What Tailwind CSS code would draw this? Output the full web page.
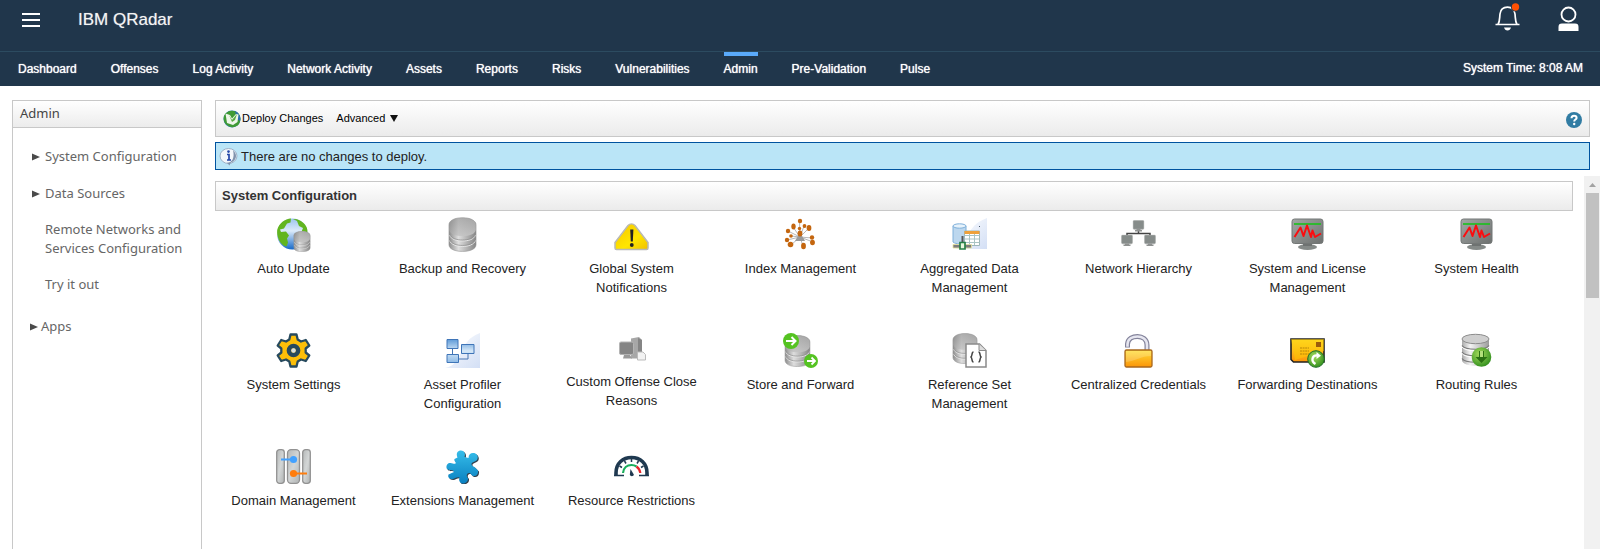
<!DOCTYPE html>
<html lang="en">
<head>
<meta charset="utf-8">
<title>IBM QRadar</title>
<script src="https://cdn.jsdelivr.net/npm/@tailwindcss/browser@4"></script>
</head>
<body class="flex h-screen flex-col overflow-hidden bg-white font-['Liberation_Sans',Arial,sans-serif] text-[13px] text-[#222]">

<svg class="absolute size-0" aria-hidden="true">
  <defs>
    <linearGradient id="steel" x1="0" x2="1"><stop offset="0" stop-color="#8d8d8d"/><stop offset=".35" stop-color="#dedede"/><stop offset="1" stop-color="#858585"/></linearGradient>
    <linearGradient id="steelTop" x1="0" y1="0" x2="1" y2="1"><stop offset="0" stop-color="#8f8f8f"/><stop offset="1" stop-color="#d4d4d4"/></linearGradient>
    <linearGradient id="silver" x1="0" x2="1"><stop offset="0" stop-color="#a9a9a9"/><stop offset=".3" stop-color="#f4f4f4"/><stop offset="1" stop-color="#9c9c9c"/></linearGradient>
    <linearGradient id="slab" x1="0" y1="0" x2="1" y2="1"><stop offset="0" stop-color="#b5b8b8"/><stop offset=".5" stop-color="#d3d6d6"/><stop offset="1" stop-color="#b0b3b3"/></linearGradient>
    <linearGradient id="screen" x1="0" y1="0" x2="1" y2="1"><stop offset="0" stop-color="#a3a8a6"/><stop offset="1" stop-color="#6d706f"/></linearGradient>
    <linearGradient id="sea" x1="0" y1="0" x2="0" y2="1"><stop offset="0" stop-color="#9cc4ee"/><stop offset=".4" stop-color="#dcebfa"/><stop offset="1" stop-color="#1669c9"/></linearGradient>
    <linearGradient id="sun" x1="0" y1="0" x2="1" y2="1"><stop offset="0" stop-color="#f5c400"/><stop offset=".6" stop-color="#ffe600"/><stop offset="1" stop-color="#f0c000"/></linearGradient>
    <linearGradient id="amber" x1="0" y1="0" x2="0" y2="1"><stop offset="0" stop-color="#ffe03a"/><stop offset="1" stop-color="#fb9408"/></linearGradient>
    <linearGradient id="haze" x1="0" y1="0" x2="1" y2="1"><stop offset="0" stop-color="#ffffff"/><stop offset="1" stop-color="#d3dff5"/></linearGradient>
    <linearGradient id="blueBox" x1="0" y1="0" x2="0" y2="1"><stop offset="0" stop-color="#5f9bd8"/><stop offset=".5" stop-color="#d6e8f8"/><stop offset="1" stop-color="#8fbbe6"/></linearGradient>
    <linearGradient id="piece" x1="0" y1="0" x2="0" y2="1"><stop offset="0" stop-color="#35bdea"/><stop offset="1" stop-color="#0a80c0"/></linearGradient>
    <radialGradient id="leaf" cx=".4" cy=".35" r=".7"><stop offset="0" stop-color="#a5dc5c"/><stop offset="1" stop-color="#2f8d1c"/></radialGradient>
    <symbol id="disk" viewBox="0 0 30 36">
      <path d="M1 8C1 3.500 7 .6 15 .6S29 3.500 29 8V28.500C29 33 23 35.500 15 35.500S1 33 1 28.500Z" fill="url(#steel)"/>
      <path d="M1 8C1 3.500 7 .6 15 .6S29 3.500 29 8V13C28 17.500 22 19.500 15 19.500S2 17.500 1 13Z" fill="url(#steelTop)" opacity=".7"/>
      <path d="M1.500 18.500C3 23 9 24.700 15 24.700S27 23 28.500 18.500M1.500 24C3 28.500 9 30.300 15 30.300S27 28.500 28.500 24" fill="none" stroke="#e9e9e9"/>
      <path d="M1.500 17.500C3 22 9 23.700 15 23.700S27 22 28.500 17.500M1.500 23C3 27.500 9 29.300 15 29.300S27 27.500 28.500 23" fill="none" stroke="#8a8a8a" stroke-width=".7"/>
      <path d="M1 8C1 3.500 7 .6 15 .6S29 3.500 29 8V28.500C29 33 23 35.500 15 35.500S1 33 1 28.500Z" fill="none" stroke="#959595" stroke-width=".6"/>
    </symbol>
    <symbol id="monitor" viewBox="0 0 35 35">
      <ellipse cx="17.500" cy="30" rx="9.500" ry="3" fill="#858a88"/><path d="M13 25h9v4h-9z" fill="#6e7271"/>
      <rect x="2" y="2" width="31" height="24.500" rx="2.500" fill="url(#screen)" stroke="#737776"/>
      <path d="M4 7h27" stroke="#19c21b" stroke-width="1.600"/>
      <path d="M4.500 20 10.500 10.500 13.500 19 17 8.500 21 20 22.500 13.500 25 20 31 16.500" fill="none" stroke="#fb0d10" stroke-width="2" stroke-linejoin="round"/>
    </symbol>
    <symbol id="node" viewBox="0 0 12 12">
      <rect x=".6" y=".6" width="10.800" height="8.600" rx="1" fill="#868c8a" stroke="#a9acab" stroke-width=".7"/><path d="M4 9h4v1h1.500v1.500h-7V10H4z" fill="#8f9291"/>
    </symbol>
    <symbol id="arrow" viewBox="0 0 8 8"><path d="M0 .5v7L8 4z" fill="#4a4a4a"/></symbol>
    <path id="jigsaw" d="M12.500 8.500C10.500 4 13 1.500 16 1.500s5 3 3.500 6.500L23.500 9C23.500 5 26 3.500 29 4s5 4 3 7c-1.500 2-4.500 1.500-5.500 3.500-.5 2 1.500 3 3 3.500l3.500 3.500c.5 4-2 6-4.500 5.500s-2.500-3.500-5-3c-2.500 1-2 3.500-.5 5 .5 3.500-2.500 5.500-5.500 5.500-3-.5-4-3.500-3-6-2.500-1-5 1.500-7 1.500-3.500 0-5-2-4-4.500L9 23C8 20 4.500 22 2.500 20.500.5 18.500 1.500 14.500 4.500 14c3-.5 4.500 1.500 6 .5 1-1.500-2-2.500-1-4.500z"/>
  </defs>
</svg>

<header class="shrink-0 bg-[#20364b] text-white">
  <div class="flex h-[52px] items-start border-b border-[#2c4b60] pr-[21px] pl-[22px]">
    <button aria-label="Menu" class="mt-3"><svg class="h-[15px] w-[18px]" viewBox="0 0 18 15" stroke="#fff" stroke-width="2"><path d="M0 2h18M0 8h18M0 14h18"/></svg></button>
    <h1 class="ml-[38px] pt-2 text-[17px] leading-6 text-[#f4f4f4] text-shadow-[0_0_1px_#ffffff80]">IBM QRadar</h1>
    <button aria-label="Notifications" class="mt-[2px] ml-auto"><svg class="h-[30px] w-[27px]" viewBox="0 0 27 30" fill="none">
      <path d="M1.500 22.500h24M4 22.500C6 19 5.500 16 6 12 6.500 7.500 9.500 5.200 13.500 5.200s7 2.300 7.500 6.800c.5 4 0 7 2 10.500" stroke="#fff" stroke-width="1.700"/>
      <path d="M10 25.500h7c-.6 2-1.800 3-3.500 3s-2.900-1-3.500-3z" fill="#fff"/>
      <circle cx="21.500" cy="5" r="4.600" fill="#20364b"/><circle cx="21.500" cy="5" r="3.700" fill="#ff5003"/></svg></button>
    <button aria-label="User" class="mt-[6px] ml-[37px]"><svg class="h-[25px] w-[21px]" viewBox="0 0 21 25">
      <circle cx="10.500" cy="8.500" r="7" fill="none" stroke="#fff" stroke-width="1.800"/><path d="M.5 25v-4c0-2.500 1-3.500 3.500-3.500h13c2.500 0 3.500 1 3.500 3.500v4z" fill="#fff"/></svg></button>
  </div>
  <div class="flex h-[34px] items-start justify-between pr-[17px] pl-[18px] text-xs font-medium text-shadow-[0_0_1px_#ffffff]">
    <nav class="flex gap-[34px] leading-[26px]">
      <a href="#" class="border-t-4 border-transparent">Dashboard</a>
      <a href="#" class="border-t-4 border-transparent">Offenses</a>
      <a href="#" class="border-t-4 border-transparent">Log Activity</a>
      <a href="#" class="border-t-4 border-transparent">Network Activity</a>
      <a href="#" class="border-t-4 border-transparent">Assets</a>
      <a href="#" class="border-t-4 border-transparent">Reports</a>
      <a href="#" class="border-t-4 border-transparent">Risks</a>
      <a href="#" class="border-t-4 border-transparent">Vulnerabilities</a>
      <a href="#" class="border-t-4 border-[#5aaafa]">Admin</a>
      <a href="#" class="border-t-4 border-transparent">Pre-Validation</a>
      <a href="#" class="border-t-4 border-transparent">Pulse</a>
    </nav>
    <p class="leading-8">System Time: 8:08 AM</p>
  </div>
</header>

<div class="flex min-h-0 grow">
  <aside class="mt-[14px] ml-3 w-[190px] shrink-0 border border-b-0 border-[#c8c8c8] font-['Noto_Sans',sans-serif] leading-[19px] text-[#666]">
    <h2 class="border-b border-[#c8c8c8] bg-linear-to-b from-white to-[#ececec] px-[7px] pt-[3px] pb-1 text-[#444]">Admin</h2>
    <ul class="pt-[19px] pl-[19px]">
      <li><a href="#" class="flex items-center gap-[5px]"><svg class="size-2"><use href="#arrow"/></svg>System Configuration</a></li>
      <li class="mt-[18px]"><a href="#" class="flex items-center gap-[5px]"><svg class="size-2"><use href="#arrow"/></svg>Data Sources</a></li>
      <li class="mt-[17px] pl-[13px]"><a href="#" class="block">Remote Networks and<br>Services Configuration</a></li>
      <li class="mt-[17px] pl-[13px]"><a href="#" class="block">Try it out</a></li>
    </ul>
    <a href="#" class="mt-[23px] ml-[17px] flex items-center gap-[3px]"><svg class="size-2"><use href="#arrow"/></svg>Apps</a>
  </aside>

  <main class="ml-[7px] flex min-w-0 grow flex-col pt-[14px]">
    <div class="mr-[10px] ml-[6px] flex h-[37px] shrink-0 items-center border border-[#c8c8c8] bg-linear-to-b from-white to-[#ebebeb] pr-[7px] pl-[7px] text-[11px] text-black">
      <button class="flex items-center gap-px"><svg class="size-[18px]" viewBox="0 0 18 18"><circle cx="9" cy="9" r="8.500" fill="#2e7fb8"/><path d="M1 6C3 1 10-1 15 3c3 3 3 8 1 11-3 4-9 4-12 1C1 13 0 9 1 6z" fill="#3f9a35"/><path d="M12 1c4 2 6 6 5 10l-3-2z" fill="#2c6fb0"/><path d="M2.500 3.500 7 5l2 3.500L13 4l2.500.5L14.500 12 10 15 4 13z" fill="#eef6ea"/><path d="m6 5 3 5 5-6-2 6-3 2z" fill="#58ab43"/></svg>Deploy Changes</button>
      <button class="ml-[13px] flex items-center gap-[5px]">Advanced <svg class="h-[7px] w-2" viewBox="0 0 8 7"><path d="M0 0h8L4 7z" fill="#111"/></svg></button>
      <button aria-label="Help" class="mt-[3px] ml-auto"><svg class="size-4" viewBox="0 0 16 16"><circle cx="8" cy="8" r="8" fill="#317ca3"/><path d="M5.500 6.200C5.500 4.500 6.500 3.700 8 3.700s2.600.9 2.600 2.200C10.600 7.600 8.200 7.500 8.200 9.500" fill="none" stroke="#fff" stroke-width="2"/><circle cx="8.200" cy="12" r="1.200" fill="#fff"/></svg></button>
    </div>
    <p class="mt-[5px] mr-[10px] ml-[6px] flex h-7 shrink-0 items-center gap-[3px] border border-[#00539f] bg-[#bae5f7] pt-px pl-[3px]"><svg class="h-[18px] w-[19px]" viewBox="0 0 19 18"><ellipse cx="9.500" cy="8" rx="8.500" ry="7.500" fill="#f4f7fb" stroke="#9db0c6"/><path d="M14 2.500c4 3 4 8 0 11-1.500 1-2.500 1.200-2.500 1.200L10.500 17.500 8 14.800c5 0 8-5 6-12.300z" fill="#8093ad"/><path d="M8 6.500h2v5.500M8 12h4" fill="none" stroke="#2546a8" stroke-width="1.700"/><circle cx="9.500" cy="3.600" r="1.300" fill="#2546a8"/></svg>There are no changes to deploy.</p>

    <div class="mt-[6px] flex min-h-0 grow">
      <div class="min-w-0 grow overflow-hidden pt-[5px]">
        <h2 class="mr-[11px] ml-[6px] border border-[#c8c8c8] bg-linear-to-b from-white to-[#ebebeb] px-[6px] leading-7 font-bold text-[#333]">System Configuration</h2>
        <div class="mt-[6px] mr-[23px] grid grid-cols-8 gap-y-9 text-center leading-[19px]">
          <a href="#" class="flex flex-col items-center gap-[7px] px-[10px]"><svg class="size-[35px]" viewBox="0 0 35 35"><circle cx="16.500" cy="17" r="15.500" fill="url(#sea)"/><path d="M15 1.500C9 2 3 6 1.200 13c-.6 6 1.800 12 6.300 15.500l3 1 1.500-4-1-4 2-3-3-4-5 .5-1-2.500 4-1 3-5 3.500-1zM17 2l4 2 2 5 4 2-2 5 3 4 2 0c2.500-5 1.800-10-2.500-14C25 3.500 21 1.500 17 2z" fill="#62b51f"/><use href="#disk" x="17" y="14" width="18" height="21"/></svg>Auto Update</a>
          <a href="#" class="flex flex-col items-center gap-[7px] px-[10px]"><svg class="size-[35px]" viewBox="0 0 35 35"><use href="#disk" x="3" y="0" width="29" height="35"/></svg>Backup and Recovery</a>
          <a href="#" class="flex flex-col items-center gap-[7px] px-[10px]"><svg class="size-[35px]" viewBox="0 0 35 35"><path d="M14 8.500C16 6.500 19 6.500 21 8.500L34 25.500v5.500q0 1.500-1.500 1.500H2.500Q1 32.500 1 31V25.500z" fill="url(#sun)" stroke="#b9b9b4" stroke-width="1.500"/><path d="M16.200 12.500h3.200l-.6 12h-2z" fill="#222"/><circle cx="17.800" cy="28" r="1.900" fill="#222"/></svg>Global System Notifications</a>
          <a href="#" class="flex flex-col items-center gap-[7px] px-[10px]"><svg class="size-[35px]" viewBox="0 0 35 35"><path d="M17 20 16.500 4M17 20 10 10M17 20 5 14M17 20 8 19M17 20 4 23M17 20 8 28M17 20 20 29M17 20 29 21M17 20 30 25M17 20 26 11M17 20 21 9" stroke="#b8b8b8"/><path d="M17 15.500 22 24H12z" fill="#9a9a9a"/><g fill="#c4660f"><circle cx="17" cy="4" r="2.200"/><ellipse cx="10.500" cy="9.500" rx="2.200" ry="2.900"/><circle cx="5" cy="14" r="2.200"/><circle cx="8" cy="19" r="1.800"/><circle cx="4" cy="23" r="2.200"/><circle cx="7.500" cy="27.500" r="2.800"/><ellipse cx="20.500" cy="29" rx="2.400" ry="3.200"/><circle cx="29" cy="20.500" r="2.200"/><ellipse cx="29.500" cy="25.500" rx="2.400" ry="2.700"/><ellipse cx="26" cy="11" rx="2.400" ry="3"/><circle cx="21.500" cy="9" r="1.900"/><circle cx="16.500" cy="11.500" r="1.700"/><ellipse cx="17" cy="16.500" rx="2.400" ry="3"/></g></svg>Index Management</a>
          <a href="#" class="flex flex-col items-center gap-[7px] px-[10px]"><svg class="size-[35px]" viewBox="0 0 35 35"><path d="M35 1v31H3C17 29 12 9 35 1z" fill="url(#haze)"/><path d="M1 9v16c3 2.500 10 2.500 13 0V9z" fill="#bcd7ee" stroke="#7fb0da"/><ellipse cx="7.500" cy="9" rx="6.500" ry="2.200" fill="#e6f2fb" stroke="#7fb0da"/><path d="M12.500 14h15v14.500h-15z" fill="#fff" stroke="#9db7b9"/><path d="M12.500 18.500h15M12.500 22h15M12.500 25.500h15M17.500 15v13M22.500 15v13" stroke="#a9c4c3"/><path d="M12.500 14h15v3h-15z" fill="#eea13b"/><path d="M27 9.500h1" stroke="#456"/><path d="M1 27.500h18.500v3.500H1z" fill="#7d7d7d" stroke="#e8e5a0" stroke-width=".8"/><path d="M10.500 19v9" stroke="#555" stroke-width="2"/><path d="M8 25.500h5V32H8z" fill="#e7f7dd" stroke="#278047" stroke-width="1.700"/></svg>Aggregated Data Management</a>
          <a href="#" class="flex flex-col items-center gap-[7px] px-[10px]"><svg class="size-[35px]" viewBox="0 0 35 35"><path d="M17.500 13v3.500M6 19.500v-3h23v3" fill="none" stroke="#444" stroke-width="1.500"/><use href="#node" x="11.500" y="3" width="12" height="12"/><use href="#node" x="0" y="17.500" width="12" height="12"/><use href="#node" x="23" y="17.500" width="12" height="12"/></svg>Network Hierarchy</a>
          <a href="#" class="flex flex-col items-center gap-[7px] px-[10px]"><svg class="size-[35px]"><use href="#monitor"/></svg>System and License Management</a>
          <a href="#" class="flex flex-col items-center gap-[7px] px-[10px]"><svg class="size-[35px]"><use href="#monitor"/></svg>System Health</a>

          <a href="#" class="flex flex-col items-center gap-[7px] px-[10px]"><svg class="size-[35px]" viewBox="0 0 35 35"><path d="M14.500 1.500h6l1.200 5 3.300 2 4.800-1.500 3.500 5.500-3.600 3v4l3.600 3-3.500 5.500-4.800-1.500-3.300 2-1.200 5h-6l-1.200-5-3.300-2-4.800 1.500L1.700 22.500l3.600-3v-4l-3.600-3L5.200 7 10 8.500l3.300-2z" fill="#fdbf08" stroke="#274a5e" stroke-width="2.300" stroke-linejoin="round"/><circle cx="17.500" cy="17.500" r="4.600" fill="#fdbf08" stroke="#274a5e" stroke-width="4.500"/><circle cx="17.500" cy="17.500" r="2.200" fill="#d8e1e6"/></svg>System Settings</a>
          <a href="#" class="flex flex-col items-center gap-[7px] px-[10px]"><svg class="size-[35px]" viewBox="0 0 35 35"><path d="M35 0v35H0C20 31 12 8 35 0z" fill="url(#haze)"/><path d="M7.500 15v7M13 26h10v-8" fill="none" stroke="#4675b2"/><g fill="url(#blueBox)" stroke="#3f75b8"><path d="M2 6.500h11v9H2zM16.500 11.500h12.500v9H16.500zM2 21.500h11.500v8H2z"/></g></svg>Asset Profiler Configuration</a>
          <a href="#" class="flex flex-col items-center gap-[7px] px-[10px]"><svg class="size-8" viewBox="0 0 32 32"><path d="M15 5.500 23 4l3 3v15L22 25.500H15z" fill="#a7a7a7"/><path d="M22 5l4 2v15L22 25z" fill="#858585"/><rect x="3.500" y="9" width="14" height="12.500" rx="1.500" fill="#858585" stroke="#b4b4b4"/><path d="M8 22h6l2 3.500H7z" fill="#999"/><path d="M21.500 19h5.500l2.500 2.500V27h-8z" fill="#f2f2f2" stroke="#bbb"/></svg>Custom Offense Close Reasons</a>
          <a href="#" class="flex flex-col items-center gap-[7px] px-[10px]"><svg class="size-[35px]" viewBox="0 0 35 35"><use href="#disk" x="1" y="2" width="27" height="32"/><circle cx="8" cy="8" r="8" fill="#55c322"/><path d="M3 8h9M8.500 4l4 4-4 4" fill="none" stroke="#fff" stroke-width="2"/><circle cx="28" cy="28" r="7" fill="#55c322"/><path d="M24 28h8M28.500 24.500l3.500 3.500-3.500 3.500" fill="none" stroke="#fff" stroke-width="1.800"/></svg>Store and Forward</a>
          <a href="#" class="flex flex-col items-center gap-[7px] px-[10px]"><svg class="size-[35px]" viewBox="0 0 35 35"><use href="#disk" x="0" y="0" width="26" height="31"/><path d="M14 11h13.500l6.500 6.500V34H14z" fill="#fff" stroke="#8a8a8a" stroke-width="1.500"/><path d="M27 11v6.500h7" fill="#ddd" stroke="#8a8a8a"/><path d="M21.500 19c-2.500 0-.5 4.500-3 5 2.500.5.500 5 3 5M26.500 19c2.500 0 .5 4.500 3 5-2.500.5-.5 5-3 5" fill="none" stroke="#444" stroke-width="1.500"/></svg>Reference Set Management</a>
          <a href="#" class="flex flex-col items-center gap-[7px] px-[10px]"><svg class="size-[35px]" viewBox="0 0 35 35"><path d="M6.500 14.500V11C7 5.500 12 3.500 16.500 3.500S26 6 26 12v6" fill="none" stroke="#82829a" stroke-width="5"/><path d="M6.500 13.800V11C7 5.500 12 3.500 16.500 3.500S26 6 26 12v6" fill="none" stroke="#e6e6f0" stroke-width="2.600"/><rect x="4" y="17" width="27" height="17" rx="1.500" fill="url(#amber)" stroke="#a8671d" stroke-width="1.300"/><path d="M5 18h25v5C20 23 14 28 5 29z" fill="#fff" opacity=".2"/></svg>Centralized Credentials</a>
          <a href="#" class="flex flex-col items-center gap-[7px] px-[10px]"><svg class="size-[35px]" viewBox="0 0 35 35"><path d="M1 6h33v23H3.500L1 26.500z" fill="url(#amber)" stroke="#222" stroke-width="1.600"/><path d="M1 6h33v12L5 27z" fill="#fdcb00" opacity=".5"/><path d="M26 9h5v5h-5z" fill="#9b5b0c"/><path d="M10 15h9M10 18h9M10 21h9" stroke="#b7860b" stroke-dasharray="2 .6"/><circle cx="26" cy="26" r="8.300" fill="url(#leaf)" stroke="#1f6f26"/><path d="M25.500 31c-5-3-3.500-9 2-8.500" fill="none" stroke="#fff" stroke-width="2.300"/><path d="m26.500 19 4.500 3.700-4.500 3.300z" fill="#fff"/></svg>Forwarding Destinations</a>
          <a href="#" class="flex flex-col items-center gap-[7px] px-[10px]"><svg class="size-[35px]" viewBox="0 0 35 35"><path d="M3 6v21.500c1 7 26 7 27 0V6z" fill="url(#silver)"/><ellipse cx="16.500" cy="6" rx="13.500" ry="4.700" fill="#cfcfcf" stroke="#8d8d8d"/><path d="M3 12.500c3 5 24 5 27 0M3 19c3 5 24 5 27 0M3 25.500c3 5 24 5 27 0" fill="none" stroke="#7a7a7a" stroke-width="1.200"/><path d="M3 14c3 5 24 5 27 0M3 20.500c3 5 24 5 27 0" fill="none" stroke="#fff"/><circle cx="22.500" cy="24" r="9.800" fill="url(#leaf)"/><path d="M20 18h5v6h3.500l-6 6-6-6H20z" fill="#2a7012"/><path d="M21 18h3v6h-3z" fill="#b3df7c"/></svg>Routing Rules</a>

          <a href="#" class="flex flex-col items-center gap-[7px] px-[10px]"><svg class="size-[35px]" viewBox="0 0 35 35"><g fill="url(#slab)" stroke="#929292" stroke-width="1.300"><rect x=".7" y=".7" width="7.600" height="33.600" rx="2.800"/><rect x="11.500" y=".7" width="12" height="33.600" rx="3.500"/><rect x="26.700" y=".7" width="7.600" height="33.600" rx="2.800"/></g><path d="M5 10.500h12" stroke="#42a1ff" stroke-width="2"/><circle cx="17.500" cy="10.500" r="3.600" fill="#42a1ff"/><path d="M18 24.500h13" stroke="#ff7d0d" stroke-width="2"/><circle cx="17.500" cy="24.500" r="3.600" fill="#ff7d0d"/></svg>Domain Management</a>
          <a href="#" class="flex flex-col items-center gap-[7px] px-[10px]"><svg class="size-[35px]" viewBox="0 0 35 35"><use href="#jigsaw" x="1" y="1" fill="#34424e"/><use href="#jigsaw" fill="url(#piece)"/></svg>Extensions Management</a>
          <a href="#" class="flex flex-col items-center gap-[7px] px-[10px]"><svg class="size-[35px]" viewBox="0 0 35 35"><path d="M2 26.500V24C2 14 9 8.500 17.500 8.500S33 14 33 24v2.500" fill="none" stroke="#1f3950" stroke-width="3.600"/><path d="M0 26.500h10M25 26.500h10" stroke="#1f3950" stroke-width="1.600"/><path d="M17.500 10v3M10.500 12l1.500 2.500M24.500 12 23 14.500M5.500 17l2.500 1.500M29.500 17 27 18.500" stroke="#1f3950" stroke-width="1.500"/><path d="M9 24c.5-5 4-8 8.500-8 2 0 3.500.5 5 1.500" fill="none" stroke="#1aae5c" stroke-width="2.200"/><path d="M22.500 17.500c2 1.500 3.500 3.500 3.800 6.500" fill="none" stroke="#e8262b" stroke-width="2.200"/><path d="m16.500 20 3.300 5.500c0 2-3.500 2.500-4 0z" fill="#1f3950"/></svg>Resource Restrictions</a>
        </div>
      </div>
      <div class="flex w-4 shrink-0 flex-col items-center bg-[#f1f1f1]" aria-hidden="true">
        <svg class="mt-[7px] h-1 w-[7px]" viewBox="0 0 7 4"><path d="M0 4h7L3.500 0z" fill="#a3a3a3"/></svg>
        <div class="mt-[6px] h-[105px] w-[13px] bg-[#c1c1c1]"></div>
      </div>
    </div>
  </main>
</div>
</body>
</html>
